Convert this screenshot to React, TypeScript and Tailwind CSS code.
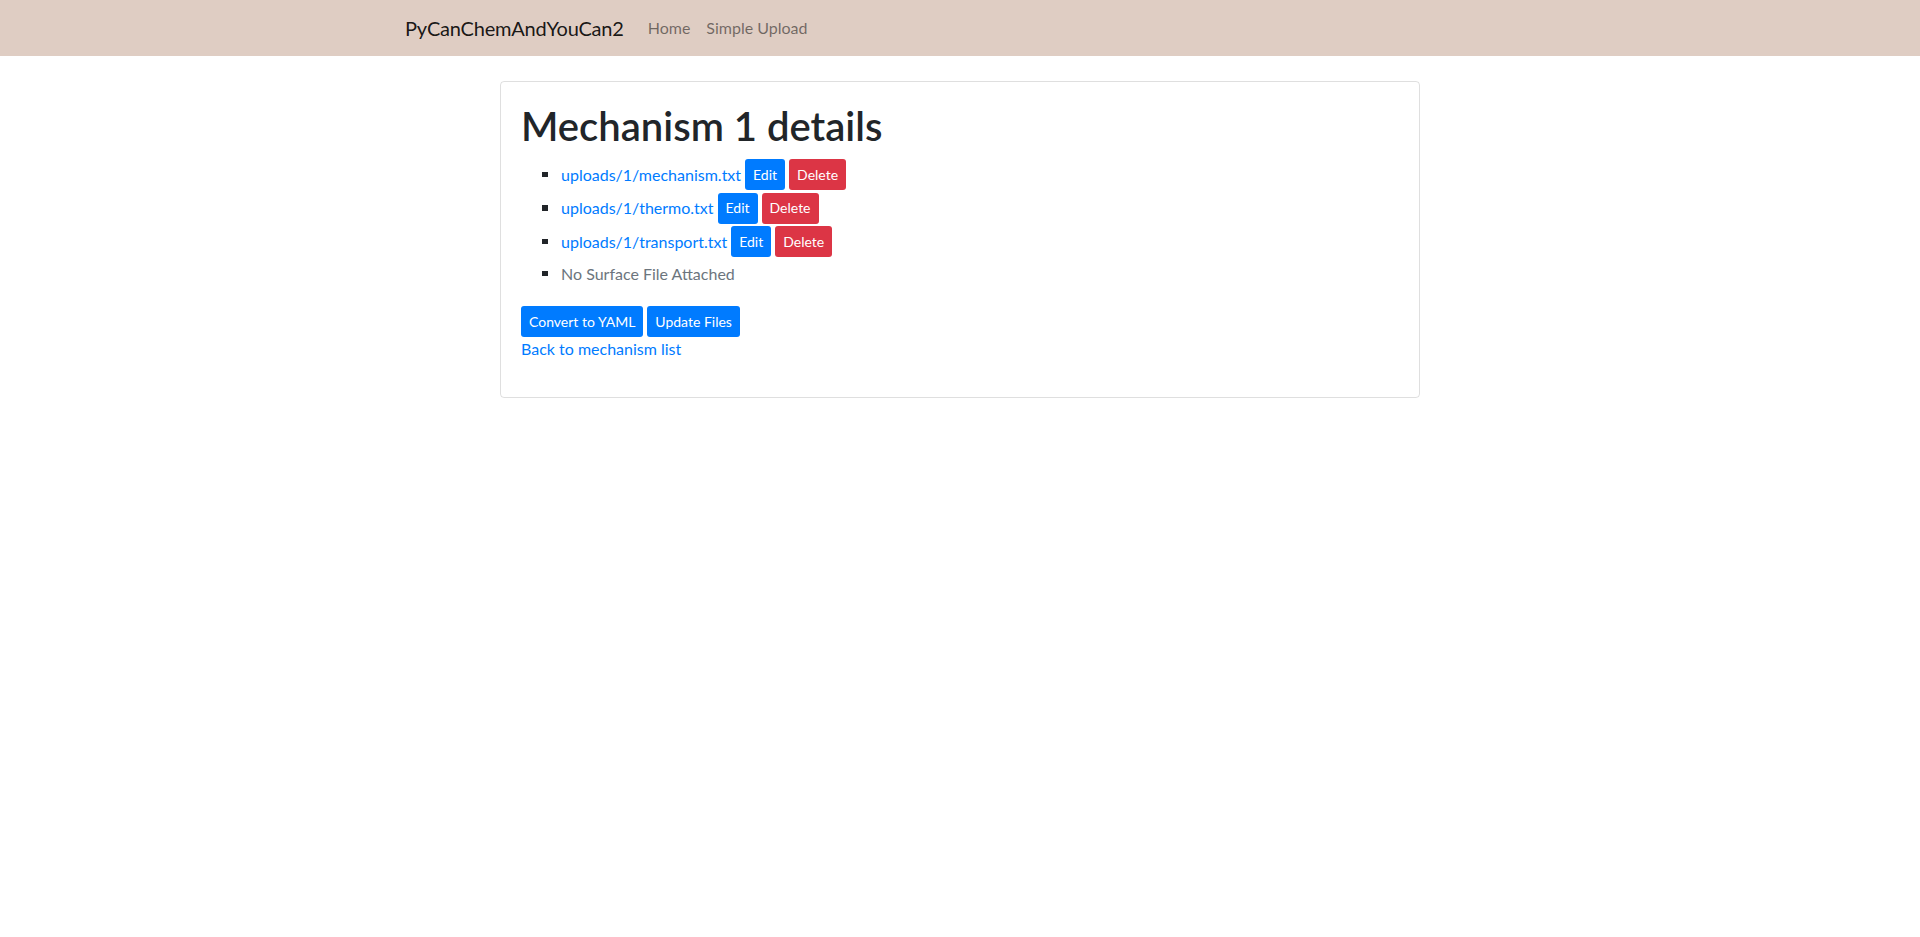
import React from "react";

const files = [
  "uploads/1/mechanism.txt",
  "uploads/1/thermo.txt",
  "uploads/1/transport.txt",
];

function FileRow({ path }: { path: string }) {
  return (
    <li className="flex items-center h-[33.5px]">
      <span className="w-[5.5px] h-[5.5px] bg-[#212529] ml-[-19px] mr-[13.5px] mt-[-1px]" />
      <a href="#" className="text-[#007bff]">
        {path}
      </a>
      <button className="ml-[4px] h-[31px] px-2 text-sm text-white bg-[#007bff] rounded-[3px]">
        Edit
      </button>
      <button className="ml-[4px] h-[31px] px-2 text-sm text-white bg-[#dc3545] rounded-[3px]">
        Delete
      </button>
    </li>
  );
}

export default function App() {
  return (
    <div className="min-h-[937px] bg-white text-[#212529] font-['Lato',sans-serif] text-base">
      <nav className="h-[56px] bg-[#dfcdc3]">
        <div className="w-[1140px] mx-auto px-[15px] h-full flex items-center">
          <a href="#" className="text-xl tracking-[-0.2px] text-[rgba(0,0,0,0.9)] mr-4">
            PyCanChemAndYouCan2
          </a>
          <a href="#" className="px-2 text-[rgba(0,0,0,0.5)]">
            Home
          </a>
          <a href="#" className="px-2 text-[rgba(0,0,0,0.5)]">
            Simple Upload
          </a>
        </div>
      </nav>

      <div className="w-[920px] ml-[500px] mt-[25px] border border-[rgba(0,0,0,0.125)] rounded-[4px] px-[20px] pt-[20px] pb-[20px]">
        <h1 className="text-[40px] leading-[48px] font-semibold">Mechanism 1 details</h1>
        <ul className="mt-[8px] pl-[40px]">
          {files.map((f) => (
            <FileRow key={f} path={f} />
          ))}
          <li className="flex items-center h-[31px]">
            <span className="w-[5.5px] h-[5.5px] bg-[#212529] ml-[-19px] mr-[13.5px] mt-[-1px]" />
            <span className="text-[#6c757d]">No Surface File Attached</span>
          </li>
        </ul>
        <div className="mt-[16.5px] flex gap-[4px]">
          <button className="h-[31px] px-2 text-sm text-white bg-[#007bff] rounded-[3px]">
            Convert to YAML
          </button>
          <button className="h-[31px] px-2 text-sm text-white bg-[#007bff] rounded-[3px]">
            Update Files
          </button>
        </div>
        <a href="#" className="block text-[#007bff] leading-6 mb-4">
          Back to mechanism list
        </a>
      </div>
    </div>
  );
}
